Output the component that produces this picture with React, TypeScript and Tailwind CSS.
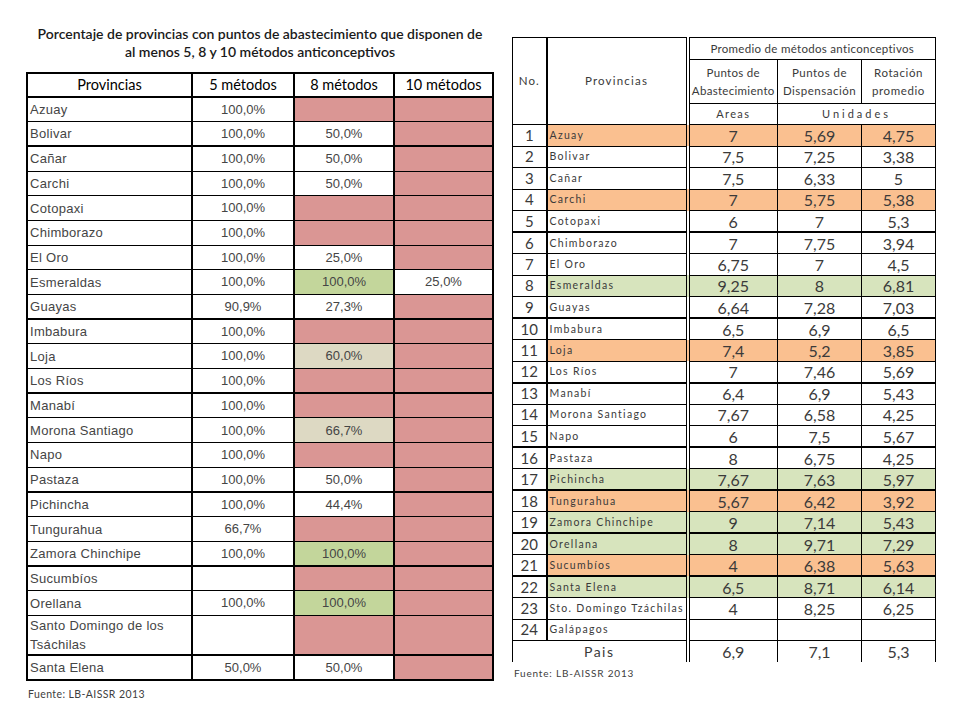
import React from 'react';

type Fill = 'r' | 'g' | 'b' | 'o' | 'v' | undefined;

interface PctCell {
  v: string;
  f?: Fill;
}

interface PctRow {
  name: string;
  cells: [PctCell, PctCell, PctCell];
  thick?: boolean;
  tall?: boolean;
}

interface AvgRow {
  no: number;
  name: string;
  vals: [string, string, string];
  f?: Fill;
  thick?: boolean;
}

const fills: Record<string, string> = {
  r: 'bg-[#da9694]',
  g: 'bg-[#c3d69b]',
  b: 'bg-[#ddd9c3]',
  o: 'bg-[#fac090]',
  v: 'bg-[#d7e4bd]',
};

const R: PctCell = { v: '', f: 'r' };
const p = (v: string, f?: Fill): PctCell => ({ v, f });

const pctRows: PctRow[] = [
  { name: 'Azuay', cells: [p('100,0%'), R, R] },
  { name: 'Bolivar', cells: [p('100,0%'), p('50,0%'), R] },
  { name: 'Cañar', cells: [p('100,0%'), p('50,0%'), R], thick: true },
  { name: 'Carchi', cells: [p('100,0%'), p('50,0%'), R] },
  { name: 'Cotopaxi', cells: [p('100,0%'), R, R] },
  { name: 'Chimborazo', cells: [p('100,0%'), R, R] },
  { name: 'El Oro', cells: [p('100,0%'), p('25,0%'), R] },
  { name: 'Esmeraldas', cells: [p('100,0%'), p('100,0%', 'g'), p('25,0%')] },
  { name: 'Guayas', cells: [p('90,9%'), p('27,3%'), R] },
  { name: 'Imbabura', cells: [p('100,0%'), R, R], thick: true },
  { name: 'Loja', cells: [p('100,0%'), p('60,0%', 'b'), R] },
  { name: 'Los Ríos', cells: [p('100,0%'), R, R] },
  { name: 'Manabí', cells: [p('100,0%'), R, R], thick: true },
  { name: 'Morona Santiago', cells: [p('100,0%'), p('66,7%', 'b'), R] },
  { name: 'Napo', cells: [p('100,0%'), R, R] },
  { name: 'Pastaza', cells: [p('100,0%'), p('50,0%'), R] },
  { name: 'Pichincha', cells: [p('100,0%'), p('44,4%'), R], thick: true },
  { name: 'Tungurahua', cells: [p('66,7%'), R, R] },
  { name: 'Zamora Chinchipe', cells: [p('100,0%'), p('100,0%', 'g'), R] },
  { name: 'Sucumbíos', cells: [p(''), R, R], thick: true },
  { name: 'Orellana', cells: [p('100,0%'), p('100,0%', 'g'), R] },
  { name: 'Santo Domingo de los Tsáchilas', cells: [p(''), R, R], tall: true },
  { name: 'Santa Elena', cells: [p('50,0%'), p('50,0%'), R], thick: true },
];

const avgRows: AvgRow[] = [
  { no: 1, name: 'Azuay', vals: ['7', '5,69', '4,75'], f: 'o' },
  { no: 2, name: 'Bolivar', vals: ['7,5', '7,25', '3,38'] },
  { no: 3, name: 'Cañar', vals: ['7,5', '6,33', '5'] },
  { no: 4, name: 'Carchi', vals: ['7', '5,75', '5,38'], f: 'o' },
  { no: 5, name: 'Cotopaxi', vals: ['6', '7', '5,3'] },
  { no: 6, name: 'Chimborazo', vals: ['7', '7,75', '3,94'], thick: true },
  { no: 7, name: 'El Oro', vals: ['6,75', '7', '4,5'] },
  { no: 8, name: 'Esmeraldas', vals: ['9,25', '8', '6,81'], f: 'v' },
  { no: 9, name: 'Guayas', vals: ['6,64', '7,28', '7,03'] },
  { no: 10, name: 'Imbabura', vals: ['6,5', '6,9', '6,5'], thick: true },
  { no: 11, name: 'Loja', vals: ['7,4', '5,2', '3,85'], f: 'o' },
  { no: 12, name: 'Los Ríos', vals: ['7', '7,46', '5,69'] },
  { no: 13, name: 'Manabí', vals: ['6,4', '6,9', '5,43'], thick: true },
  { no: 14, name: 'Morona Santiago', vals: ['7,67', '6,58', '4,25'] },
  { no: 15, name: 'Napo', vals: ['6', '7,5', '5,67'] },
  { no: 16, name: 'Pastaza', vals: ['8', '6,75', '4,25'], thick: true },
  { no: 17, name: 'Pichincha', vals: ['7,67', '7,63', '5,97'], f: 'v' },
  { no: 18, name: 'Tungurahua', vals: ['5,67', '6,42', '3,92'], f: 'o', thick: true },
  { no: 19, name: 'Zamora Chinchipe', vals: ['9', '7,14', '5,43'], f: 'v' },
  { no: 20, name: 'Orellana', vals: ['8', '9,71', '7,29'], f: 'v', thick: true },
  { no: 21, name: 'Sucumbíos', vals: ['4', '6,38', '5,63'], f: 'o' },
  { no: 22, name: 'Santa Elena', vals: ['6,5', '8,71', '6,14'], f: 'v', thick: true },
  { no: 23, name: 'Sto. Domingo Tzáchilas', vals: ['4', '8,25', '6,25'] },
  { no: 24, name: 'Galápagos', vals: ['', '', ''] },
];

function PercentTable() {
  return (
    <div className="flex flex-col">
      <h1 className="h-[48px] pt-[1px] text-center font-['Lato',sans-serif] text-[14px] font-semibold leading-[18px] text-[#1a1a1a]">
        Porcentaje de provincias con puntos de abastecimiento que disponen de
        <br />
        al menos 5, 8 y 10 métodos anticonceptivos
      </h1>
      <table className="w-[466px] table-fixed border-collapse font-['Liberation_Sans',Arial,sans-serif] text-[13px] text-[#454545]">
        <colgroup>
          <col className="w-[165px]" />
          <col className="w-[102px]" />
          <col className="w-[100px]" />
          <col className="w-[99px]" />
        </colgroup>
        <thead>
          <tr className="h-[24px]">
            {['Provincias', '5 métodos', '8 métodos', '10 métodos'].map((h) => (
              <th
                key={h}
                className="border-2 border-black p-0 font-['Lato',sans-serif] text-[14.5px] font-normal text-black"
              >
                {h}
              </th>
            ))}
          </tr>
        </thead>
        <tbody>
          {pctRows.map((row, i) => {
            const isLast = i === pctRows.length - 1;
            const y = `${row.thick ? 'border-t-2' : 'border-t'} ${isLast ? 'border-b-2' : 'border-b'}`;
            return (
              <tr key={row.name} className={row.tall ? 'h-[38px]' : 'h-[24.7px]'}>
                <td className={`border-x-2 border-black px-[2px] py-0 leading-[19px] tracking-[0.3px] ${y}`}>
                  {row.tall ? (
                    <>
                      Santo Domingo de los
                      <br />
                      Tsáchilas
                    </>
                  ) : (
                    row.name
                  )}
                </td>
                {row.cells.map((c, j) => (
                  <td
                    key={j}
                    className={`border-x-2 border-black p-0 text-center ${y} ${c.f ? fills[c.f] : ''}`}
                  >
                    {c.v}
                  </td>
                ))}
              </tr>
            );
          })}
        </tbody>
      </table>
      <p className="mt-[6px] pl-[2px] font-['Lato',sans-serif] text-[10.5px] tracking-[0.4px] text-[#404040]">
        Fuente: LB-AISSR 2013
      </p>
    </div>
  );
}

function AverageTable() {
  const dbl = 'border-r-[4px] border-r-black border-double';
  return (
    <div className="flex flex-col">
      <table className="w-[423px] table-fixed border-collapse font-['Lato',sans-serif] text-[#3a3a3a]">
        <colgroup>
          <col className="w-[34px]" />
          <col className="w-[141px]" />
          <col className="w-[90px]" />
          <col className="w-[84px]" />
          <col className="w-[74px]" />
        </colgroup>
        <thead className="text-[11.5px] font-normal leading-[18px]">
          <tr className="h-[22px]">
            <th rowSpan={3} className="border border-r-2 border-black p-0 font-normal tracking-[1px]">
              No.
            </th>
            <th rowSpan={3} className={`border border-black p-0 font-normal tracking-[1.2px] ${dbl}`}>
              Provincias
            </th>
            <th colSpan={3} className="border border-black p-0 font-normal tracking-[0.3px]">
              Promedio de métodos anticonceptivos
            </th>
          </tr>
          <tr className="h-[44px]">
            <th className="border border-black p-0 font-normal tracking-[0.3px]">
              Puntos de
              <br />
              Abastecimiento
            </th>
            <th className="border border-black p-0 font-normal tracking-[0.5px]">
              Puntos de
              <br />
              Dispensación
            </th>
            <th className="border border-black p-0 font-normal tracking-[0.6px]">
              Rotación
              <br />
              promedio
            </th>
          </tr>
          <tr className="h-[21px]">
            <th className="border border-black p-0 text-[11px] font-normal tracking-[1.4px]">Areas</th>
            <th colSpan={2} className="border border-black p-0 text-[11px] font-normal tracking-[3px]">
              Unidades
            </th>
          </tr>
        </thead>
        <tbody>
          {avgRows.map((r) => {
            const t = r.thick ? 'border-t-2' : 'border-t';
            const bg = r.f ? fills[r.f] : '';
            return (
              <tr key={r.no} className="h-[21.5px]">
                <td className={`border-x border-b border-r-2 border-black p-0 text-center text-[15px] leading-[19px] ${t}`}>
                  {r.no}
                </td>
                <td className={`border-b border-black py-0 pl-[2px] pr-0 text-[10.5px] leading-[19px] tracking-[1.3px] whitespace-nowrap ${t} ${dbl} ${bg}`}>
                  {r.name}
                </td>
                {r.vals.map((v, j) => (
                  <td
                    key={j}
                    className={`border-x border-b border-black p-0 text-center text-[16px] leading-[19px] ${t} ${bg}`}
                  >
                    {v}
                  </td>
                ))}
              </tr>
            );
          })}
          <tr className="h-[21.5px]">
            <td colSpan={2} className={`border-x border-t border-black p-0 text-center text-[14px] tracking-[1.5px] ${dbl}`}>
              Pais
            </td>
            {['6,9', '7,1', '5,3'].map((v) => (
              <td key={v} className="border-x border-t border-black p-0 text-center text-[16px] leading-[19px]">
                {v}
              </td>
            ))}
          </tr>
        </tbody>
      </table>
      <p className="mt-[4px] pl-[2px] font-['Lato',sans-serif] text-[10px] tracking-[0.8px] text-[#404040]">
        Fuente: LB-AISSR 2013
      </p>
    </div>
  );
}

export default function App() {
  return (
    <div className="flex h-[720px] w-[960px] bg-white">
      <div className="ml-[26px] pt-[24px]">
        <PercentTable />
      </div>
      <div className="ml-[18px] pt-[37px]">
        <AverageTable />
      </div>
    </div>
  );
}
